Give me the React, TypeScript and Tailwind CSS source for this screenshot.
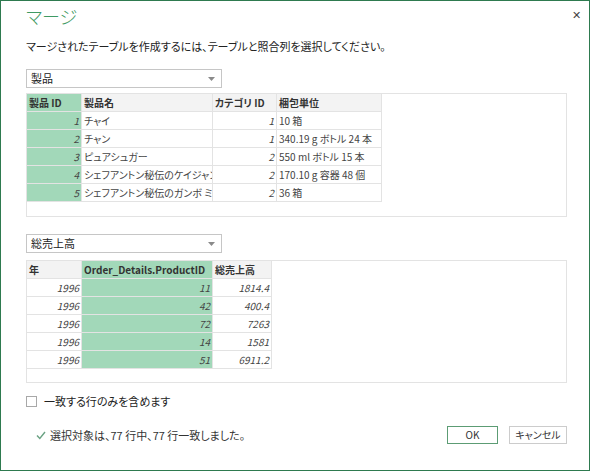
import React from "react";

const GREEN = "bg-[#a2d8b9]";

type Col = { w: number; key?: boolean; num?: boolean };

function Cell({ children, col, header }: { children: React.ReactNode; col: Col; header?: boolean }) {
  const bg = col.key ? GREEN : header ? "bg-[#f3f3f3]" : "bg-white";
  return (
    <div
      style={{ width: col.w }}
      className={`h-[18px] shrink-0 overflow-hidden whitespace-nowrap border-r border-b border-[#e3e3e3] px-[2px] leading-[17px] ${bg} ${
        header ? "font-bold text-[#333]" : "text-[#444]"
      } ${!header && col.num ? "text-right italic" : "text-left"}`}
    >
      {children}
    </div>
  );
}

function Table({ cols, header, rows, height }: { cols: Col[]; header: string[]; rows: string[][]; height: number }) {
  return (
    <div style={{ height }} className="w-[541px] border border-[#e3e3e3] bg-white">
      <div className="flex">
        {header.map((h, i) => (
          <Cell key={i} col={cols[i]} header>
            {h}
          </Cell>
        ))}
      </div>
      {rows.map((r, ri) => (
        <div className="flex" key={ri}>
          {r.map((c, ci) => (
            <Cell key={ci} col={cols[ci]}>
              {c}
            </Cell>
          ))}
        </div>
      ))}
    </div>
  );
}

function Dropdown({ label }: { label: string }) {
  return (
    <div className="flex h-[19px] w-[196px] items-center justify-between border border-[#c6c6c6] bg-white pl-[4px] pr-[6px] text-[11px] text-[#222]">
      <span>{label}</span>
      <svg width="7" height="4" viewBox="0 0 7 4">
        <polygon points="0,0 7,0 3.5,4" fill="#8a8a8a" />
      </svg>
    </div>
  );
}

export default function App() {
  const t1cols: Col[] = [
    { w: 55, key: true, num: true },
    { w: 131 },
    { w: 64, num: true },
    { w: 105 },
  ];
  const t2cols: Col[] = [
    { w: 55, num: true },
    { w: 131, key: true, num: true },
    { w: 59, num: true },
  ];
  return (
    <div
      className="h-[472px] w-[593px] bg-white [font-feature-settings:'palt']"
      style={{ fontFamily: "'Noto Sans CJK JP', sans-serif" }}
    >
      <div className="relative flex h-[471px] w-[590px] flex-col border border-[#2e7a4f] pl-[25px]">
        <div className="mt-[3px] h-[24px] text-[18px] font-light leading-[24px] text-[#3f9a63]">マージ</div>
        <div className="absolute right-[8px] top-[5px] text-[11px] text-[#444]">✕</div>
        <div className="mt-[10px] text-[11px] leading-[16px] text-[#222]">
          マージされたテーブルを作成するには、テーブルと照合列を選択してください。
        </div>
        <div className="mt-[15px]">
          <Dropdown label="製品" />
        </div>
        <div className="mt-[5px] text-[10px]">
          <Table
            cols={t1cols}
            height={124}
            header={["製品 ID", "製品名", "カテゴリ ID", "梱包単位"]}
            rows={[
              ["1", "チャイ", "1", "10 箱"],
              ["2", "チャン", "1", "340.19 g ボトル 24 本"],
              ["3", "ピュアシュガー", "2", "550 ml ボトル 15 本"],
              ["4", "シェフアントン秘伝のケイジャンシーズニング", "2", "170.10 g 容器 48 個"],
              ["5", "シェフアントン秘伝のガンボ ミックス", "2", "36 箱"],
            ]}
          />
        </div>
        <div className="mt-[17px]">
          <Dropdown label="総売上高" />
        </div>
        <div className="mt-[7px] text-[10px]">
          <Table
            cols={t2cols}
            height={123}
            header={["年", "Order_Details.ProductID", "総売上高"]}
            rows={[
              ["1996", "11", "1814.4"],
              ["1996", "42", "400.4"],
              ["1996", "72", "7263"],
              ["1996", "14", "1581"],
              ["1996", "51", "6911.2"],
            ]}
          />
        </div>
        <div className="mt-[12px] flex items-center gap-[7px]">
          <div className="h-[11px] w-[11px] border border-[#a8a8a8] bg-white" />
          <span className="text-[11px] leading-[12px] text-[#222]">一致する行のみを含めます</span>
        </div>
        <div className="mt-[19px] flex items-start pr-[22px]">
          <div className="flex items-center pl-[10px] pt-[2px]">
            <svg width="10" height="9" viewBox="0 0 10 9" className="mr-[4px]">
              <polyline points="1,4.5 3.8,7.5 9,1" fill="none" stroke="#6aa283" strokeWidth="1.4" />
            </svg>
            <span className="text-[11px] leading-[14px] text-[#333]">選択対象は、77 行中、77 行一致しました。</span>
          </div>
          <div className="ml-auto flex gap-[11px]">
            <button className="h-[18px] w-[51px] border border-[#5c9c74] bg-white text-[10px] leading-[16px] text-[#333]">
              OK
            </button>
            <button className="h-[18px] w-[58px] border border-[#cccccc] bg-white text-[10px] leading-[16px] text-[#333]">
              キャンセル
            </button>
          </div>
        </div>
      </div>
    </div>
  );
}
